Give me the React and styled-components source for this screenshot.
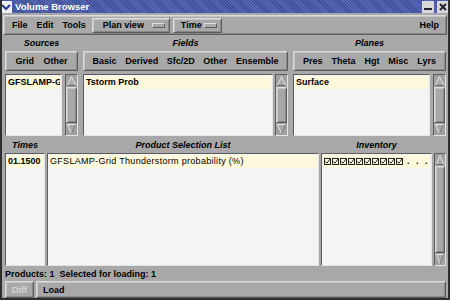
import React from 'react';
import styled, { createGlobalStyle, css } from 'styled-components';

const GlobalStyle = createGlobalStyle`
  html, body {
    margin: 0;
    padding: 0;
    background: #a8a8a8;
  }
  body {
    font-family: "Liberation Sans", Arial, sans-serif;
  }
`;

const raised = css`
  border: 1px solid;
  border-color: #dcdcdc #5c5c5c #5c5c5c #dcdcdc;
  box-shadow: inset 1px 1px 0 #c4c4c4, inset -1px -1px 0 #888;
`;

const sunken = css`
  border: 1px solid;
  border-color: #5c5c5c #e4e4e4 #e4e4e4 #5c5c5c;
`;

const Window = styled.div`
  width: 450px;
  height: 300px;
  box-sizing: border-box;
  background: #a8a8a8;
  border: 2px solid #2e2e2e;
  border-top: none;
  display: flex;
  flex-direction: column;
  overflow: hidden;
  color: #000;
`;

const TitleBar = styled.div`
  height: 13px;
  margin: 0 -2px;
  display: flex;
  align-items: center;
  background: repeating-linear-gradient(45deg, #3e4e98 0 1px, #5a6ab4 1px 2px);
  color: #fff;
  font-size: 9.5px;
  font-weight: bold;
  gap: 3px;
`;

const TitleText = styled.span`
  flex: 1;
`;

const TitleButton = styled.div`
  width: 12px;
  height: 12px;
  background: ${(p) => (p.light ? '#f0f0f0' : '#d8d8d8')};
  display: flex;
  align-items: center;
  justify-content: center;
  color: #223;
  margin-right: ${(p) => p.mr || 0}px;
`;

const MenuBar = styled.div`
  ${raised};
  margin: 2px 1px 0 1px;
  height: 20px;
  box-sizing: border-box;
  display: flex;
  align-items: center;
  padding: 0 7px 0 8px;
  font-size: 9px;
  font-weight: bold;
`;

const MenuItem = styled.span`
  margin-right: ${(p) => p.mr}px;
`;

const OptionMenu = styled.div`
  ${raised};
  height: 15px;
  box-sizing: border-box;
  width: ${(p) => p.w}px;
  display: flex;
  align-items: center;
  justify-content: space-between;
  padding: 0 4px 0 ${(p) => p.pl}px;
  margin-right: 3px;
`;

const OptionBar = styled.span`
  width: 11px;
  height: 3px;
  ${raised};
  box-shadow: none;
  background: #a8a8a8;
`;

const Spacer = styled.div`
  flex: 1;
`;

const LabelRow = styled.div`
  display: grid;
  grid-template-columns: ${(p) => p.cols};
  column-gap: ${(p) => p.gap}px;
  height: ${(p) => p.h}px;
  align-items: center;
  padding: 0 2px 0 3px;
  font-size: 9px;
  font-weight: bold;
  font-style: italic;
  text-align: center;
`;

const TopGrid = styled.div`
  display: grid;
  grid-template-columns: 73px 205px 153px;
  column-gap: 5px;
  padding: 0 2px 0 3px;
`;

const Panel = styled.div`
  display: flex;
  flex-direction: column;
  gap: 3px;
`;

const TabBar = styled.div`
  ${raised};
  height: 20px;
  box-sizing: border-box;
  display: flex;
  align-items: center;
  justify-content: space-evenly;
  font-size: 9px;
  font-weight: bold;
`;

const ListRow = styled.div`
  display: flex;
  gap: ${(p) => p.gap}px;
  height: ${(p) => p.h}px;
`;

const List = styled.div`
  ${sunken};
  background: #f4f4f4;
  flex: ${(p) => (p.w ? `0 0 ${p.w}px` : 1)};
  min-width: 0;
  box-sizing: border-box;
  overflow: hidden;
  padding: 1px;
`;

const Item = styled.div`
  background: #fef8dc;
  height: 13px;
  line-height: 13px;
  font-size: 9px;
  font-weight: ${(p) => (p.plain ? 'normal' : 'bold')};
  letter-spacing: ${(p) => (p.plain ? '0.3px' : '0')};
  padding-left: 1px;
  white-space: nowrap;
  overflow: hidden;
  display: flex;
  align-items: center;
`;

const Trough = styled.div`
  ${sunken};
  width: ${(p) => p.w}px;
  flex: 0 0 ${(p) => p.w}px;
  box-sizing: border-box;
  display: flex;
  flex-direction: column;
  background: #a0a0a0;
`;

const Thumb = styled.div`
  flex: 1;
  ${raised};
  box-sizing: border-box;
  background: #a8a8a8;
`;

const ArrowBox = styled.svg`
  display: block;
  width: 100%;
  height: 12px;
  flex: 0 0 12px;
`;

const BottomGrid = styled.div`
  display: flex;
  gap: 2px;
  height: 113px;
  padding: 0 2px 0 3px;
`;

const Status = styled.div`
  height: 15px;
  display: flex;
  align-items: center;
  padding-left: 3px;
  font-size: 9px;
  font-weight: bold;
`;

const ButtonRow = styled.div`
  display: flex;
  gap: 2px;
  padding: 0 2px 0 3px;
  height: 17px;
`;

const Button = styled.div`
  ${raised};
  box-sizing: border-box;
  flex: ${(p) => (p.w ? `0 0 ${p.w}px` : 1)};
  display: flex;
  align-items: center;
  padding-left: ${(p) => (p.w ? 0 : 6)}px;
  justify-content: ${(p) => (p.w ? 'center' : 'flex-start')};
  font-size: 9px;
  font-weight: bold;
  color: ${(p) => (p.disabled ? '#d4d4d4' : '#000')};
`;

const Checks = styled.span`
  display: flex;
  align-items: center;
  gap: 1px;
`;

const Dots = styled.span`
  margin-left: 4px;
  letter-spacing: 2px;
`;

function Arrow({ down }) {
  const pts = down ? '1.5,1.5 10.5,1.5 6,10.5' : '6,1.5 10.5,10.5 1.5,10.5';
  return (
    <ArrowBox viewBox="0 0 12 12" preserveAspectRatio="none">
      <polygon points={pts} fill="#a8a8a8" stroke="#e8e8e8" strokeWidth="1" />
      <polyline
        points={down ? '10.5,1.5 6,10.5' : '10.5,10.5 1.5,10.5'}
        fill="none"
        stroke="#606060"
        strokeWidth="1"
      />
    </ArrowBox>
  );
}

function ScrollBar({ w = 13 }) {
  return (
    <Trough w={w}>
      <Arrow />
      <Thumb />
      <Arrow down />
    </Trough>
  );
}

function CheckBox() {
  return (
    <svg width="7" height="7" viewBox="0 0 7 7">
      <rect x="0.5" y="0.5" width="6" height="6" fill="none" stroke="#222" strokeWidth="1" />
      <polyline points="1.5,3.5 3,5.2 6.5,0.5" fill="none" stroke="#222" strokeWidth="1" />
    </svg>
  );
}

const topPanels = [
  { tabs: ['Grid', 'Other'], item: 'GFSLAMP-Grid', listGap: 3 },
  { tabs: ['Basic', 'Derived', 'Sfc/2D', 'Other', 'Ensemble'], item: 'Tstorm Prob', listGap: 2 },
  { tabs: ['Pres', 'Theta', 'Hgt', 'Misc', 'Lyrs'], item: 'Surface', listGap: 3 },
];

export default function App() {
  return (
    <>
      <GlobalStyle />
      <Window>
        <TitleBar>
          <TitleButton light>
            <svg width="10" height="8" viewBox="0 0 10 8">
              <polyline points="1,2 5,6 9,2" fill="none" stroke="#2a3a8a" strokeWidth="2.2" />
            </svg>
          </TitleButton>
          <TitleText>Volume Browser</TitleText>
          <TitleButton>
            <svg width="8" height="8" viewBox="0 0 8 8">
              <rect x="0" y="5" width="8" height="2" fill="#223" />
            </svg>
          </TitleButton>
          <TitleButton mr={1}>
            <svg width="8" height="8" viewBox="0 0 8 8">
              <path d="M1 1 L7 7 M7 1 L1 7" stroke="#223" strokeWidth="2" />
            </svg>
          </TitleButton>
        </TitleBar>

        <MenuBar>
          <MenuItem mr={9}>File</MenuItem>
          <MenuItem mr={9}>Edit</MenuItem>
          <MenuItem mr={6}>Tools</MenuItem>
          <OptionMenu w={78} pl={10}>
            <span>Plan view</span>
            <OptionBar />
          </OptionMenu>
          <OptionMenu w={49} pl={7}>
            <span>Time</span>
            <OptionBar />
          </OptionMenu>
          <Spacer />
          <span>Help</span>
        </MenuBar>

        <LabelRow cols="73px 205px 153px" gap={5} h={16}>
          <span>Sources</span>
          <span>Fields</span>
          <span>Planes</span>
        </LabelRow>

        <TopGrid>
          {topPanels.map((p) => (
            <Panel key={p.item}>
              <TabBar>
                {p.tabs.map((t) => (
                  <span key={t}>{t}</span>
                ))}
              </TabBar>
              <ListRow gap={p.listGap} h={62}>
                <List>
                  <Item>{p.item}</Item>
                </List>
                <ScrollBar />
              </ListRow>
            </Panel>
          ))}
        </TopGrid>

        <LabelRow cols="40px 272px 111px" gap={2} h={17}>
          <span>Times</span>
          <span>Product Selection List</span>
          <span>Inventory</span>
        </LabelRow>

        <BottomGrid>
          <List w={40}>
            <Item>01.1500</Item>
          </List>
          <List w={272}>
            <Item plain>GFSLAMP-Grid Thunderstorm probability (%)</Item>
          </List>
          <List w={111}>
            <Item>
              <Checks>
                {Array.from({ length: 10 }).map((_, i) => (
                  <CheckBox key={i} />
                ))}
              </Checks>
              <Dots>. . .</Dots>
            </Item>
          </List>
          <ScrollBar w={12} />
        </BottomGrid>

        <Status>Products: 1&nbsp; Selected for loading: 1</Status>

        <ButtonRow>
          <Button w={29} disabled>
            Diff
          </Button>
          <Button>Load</Button>
        </ButtonRow>
      </Window>
    </>
  );
}
